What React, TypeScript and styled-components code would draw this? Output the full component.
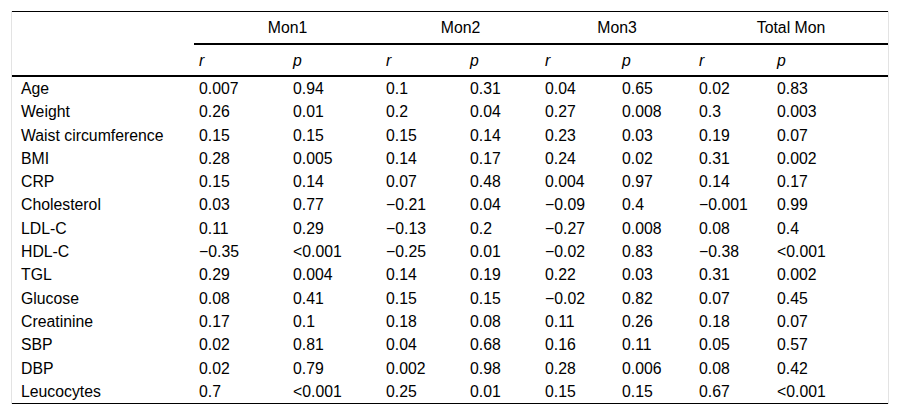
import styled, { createGlobalStyle } from 'styled-components';

const GlobalStyle = createGlobalStyle`
  html, body {
    margin: 0;
    padding: 0;
    background: #ffffff;
  }
  body {
    font-family: "Liberation Sans", Arial, sans-serif;
    color: #000;
  }
`;

const Frame = styled.div`
  margin: 11px 0 0 11px;
  width: 876px;
  border-left: 1px solid #e3e3e3;
  border-right: 1px solid #e3e3e3;
`;

const Table = styled.table`
  width: 100%;
  border-collapse: separate;
  border-spacing: 0;
  table-layout: fixed;
  font-size: 15.8px;
  border-top: 1px solid #000;
  border-bottom: 1px solid #000;
`;

const GroupHead = styled.th`
  font-weight: 400;
  text-align: center;
  padding: 6px 5px;
  line-height: 19px;
  border-bottom: 2px solid #000;
`;

const CornerHead = styled.th`
  border-bottom: 2px solid #000;
`;

const StatHead = styled.th`
  font-weight: 400;
  font-style: italic;
  text-align: left;
  padding: 5.5px 5px;
  line-height: 19px;
  border-bottom: 2px solid #000;
`;

const Label = styled.td`
  text-align: left;
  padding: 2px 5px 2px 9px;
  line-height: 19.3px;
  white-space: nowrap;
`;

const Cell = styled.td`
  text-align: left;
  padding: 2px 5px;
  line-height: 19.3px;
  white-space: nowrap;
`;

const widths = [182, 94, 93, 84, 75, 77, 77, 78, 116];

const groups = ['Mon1', 'Mon2', 'Mon3', 'Total Mon'];

const rows: [string, string[]][] = [
  ['Age', ['0.007', '0.94', '0.1', '0.31', '0.04', '0.65', '0.02', '0.83']],
  ['Weight', ['0.26', '0.01', '0.2', '0.04', '0.27', '0.008', '0.3', '0.003']],
  ['Waist circumference', ['0.15', '0.15', '0.15', '0.14', '0.23', '0.03', '0.19', '0.07']],
  ['BMI', ['0.28', '0.005', '0.14', '0.17', '0.24', '0.02', '0.31', '0.002']],
  ['CRP', ['0.15', '0.14', '0.07', '0.48', '0.004', '0.97', '0.14', '0.17']],
  ['Cholesterol', ['0.03', '0.77', '−0.21', '0.04', '−0.09', '0.4', '−0.001', '0.99']],
  ['LDL-C', ['0.11', '0.29', '−0.13', '0.2', '−0.27', '0.008', '0.08', '0.4']],
  ['HDL-C', ['−0.35', '<0.001', '−0.25', '0.01', '−0.02', '0.83', '−0.38', '<0.001']],
  ['TGL', ['0.29', '0.004', '0.14', '0.19', '0.22', '0.03', '0.31', '0.002']],
  ['Glucose', ['0.08', '0.41', '0.15', '0.15', '−0.02', '0.82', '0.07', '0.45']],
  ['Creatinine', ['0.17', '0.1', '0.18', '0.08', '0.11', '0.26', '0.18', '0.07']],
  ['SBP', ['0.02', '0.81', '0.04', '0.68', '0.16', '0.11', '0.05', '0.57']],
  ['DBP', ['0.02', '0.79', '0.002', '0.98', '0.28', '0.006', '0.08', '0.42']],
  ['Leucocytes', ['0.7', '<0.001', '0.25', '0.01', '0.15', '0.15', '0.67', '<0.001']],
];

export default function App() {
  return (
    <>
      <GlobalStyle />
      <Frame>
        <Table>
          <colgroup>
            {widths.map((w, i) => (
              <col key={i} style={{ width: w }} />
            ))}
          </colgroup>
          <thead>
            <tr>
              <CornerHead rowSpan={2} />
              {groups.map((g) => (
                <GroupHead key={g} colSpan={2}>
                  {g}
                </GroupHead>
              ))}
            </tr>
            <tr>
              {groups.map((g) => [
                <StatHead key={g + 'r'}>r</StatHead>,
                <StatHead key={g + 'p'}>p</StatHead>,
              ])}
            </tr>
          </thead>
          <tbody>
            {rows.map(([name, vals]) => (
              <tr key={name}>
                <Label>{name}</Label>
                {vals.map((v, i) => (
                  <Cell key={i}>{v}</Cell>
                ))}
              </tr>
            ))}
          </tbody>
        </Table>
      </Frame>
    </>
  );
}
